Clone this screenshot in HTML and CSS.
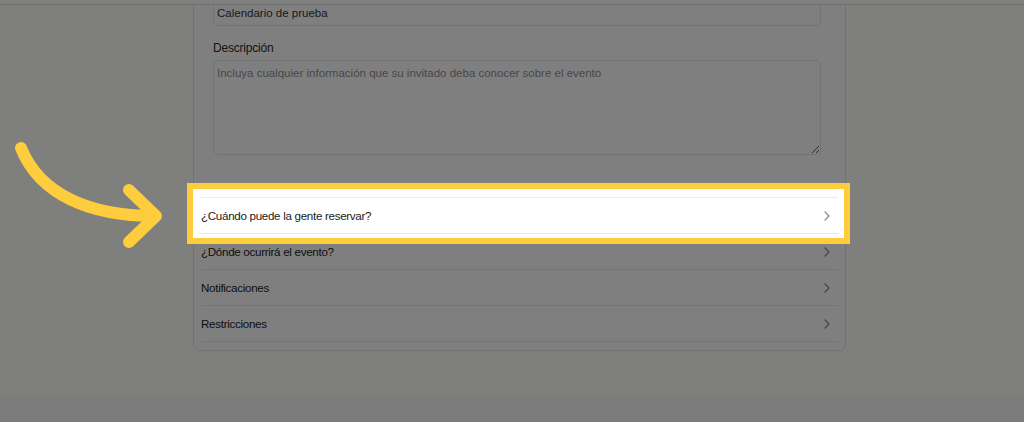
FILE: index.html
```html
<!DOCTYPE html>
<html lang="es">
<head>
<meta charset="utf-8">
<title>Evento</title>
<link rel="stylesheet" href="styles.css">
</head>
<body>
<header class="topbar"></header>
<main class="page">
  <section class="card">
    <div class="form">
      <div class="field-input">Calendario de prueba</div>
      <label class="label" for="desc">Descripción</label>
      <textarea id="desc" class="textarea" placeholder="Incluya cualquier información que su invitado deba conocer sobre el evento"></textarea>
    </div>
    <div class="list">
      <div class="spotlight">
        <div class="row row-first">
          <span>¿Cuándo puede la gente reservar?</span>
          <svg class="chev" viewBox="0 0 6 10" width="6" height="10"><path d="M1 1l4 4-4 4" fill="none" stroke="#8a8a8a" stroke-width="1.2" stroke-linecap="round" stroke-linejoin="round"/></svg>
        </div>
      </div>
      <div class="row">
        <span>¿Dónde ocurrirá el evento?</span>
        <svg class="chev" viewBox="0 0 6 10" width="6" height="10"><path d="M1 1l4 4-4 4" fill="none" stroke="#8a8a8a" stroke-width="1.2" stroke-linecap="round" stroke-linejoin="round"/></svg>
      </div>
      <div class="row">
        <span>Notificaciones</span>
        <svg class="chev" viewBox="0 0 6 10" width="6" height="10"><path d="M1 1l4 4-4 4" fill="none" stroke="#8a8a8a" stroke-width="1.2" stroke-linecap="round" stroke-linejoin="round"/></svg>
      </div>
      <div class="row">
        <span>Restricciones</span>
        <svg class="chev" viewBox="0 0 6 10" width="6" height="10"><path d="M1 1l4 4-4 4" fill="none" stroke="#8a8a8a" stroke-width="1.2" stroke-linecap="round" stroke-linejoin="round"/></svg>
      </div>
    </div>
  </section>
</main>
<footer class="footer"></footer>
<div class="overlay"></div>
<svg class="arrow" viewBox="0 0 180 260" width="180" height="260">
  <path d="M21 148 C 40 195, 90 216, 155 216" fill="none" stroke="#fecd3d" stroke-width="12" stroke-linecap="round"/>
  <path d="M129 190 L156 216 L129 242" fill="none" stroke="#fecd3d" stroke-width="12" stroke-linecap="round" stroke-linejoin="round"/>
</svg>
</body>
</html>
```
FILE: styles.css
```css
* { box-sizing: border-box; }
html, body { margin: 0; padding: 0; }
body {
  background: #fefefc;
  font-family: "Liberation Sans", Arial, sans-serif;
  color: #222;
  width: 1024px;
  height: 422px;
  overflow: hidden;
  position: relative;
}
.topbar {
  position: fixed;
  top: 0; left: 0; right: 0;
  height: 5px;
  background: #fefefc;
  border-bottom: 1px solid #dcdcdc;
  z-index: 0;
}
.page {
  padding-left: 193px;
  height: 397px;
}
.card {
  width: 653px;
  border: 1px solid #e4e4e4;
  border-top: none;
  border-radius: 0 0 7px 7px;
  padding: 0 7px 8px;
  background: #fff;
}
.form {
  padding: 0 17px 0 12px;
  display: flex;
  flex-direction: column;
}
.field-input {
  height: 26px;
  border: 1px solid #e6e6e6;
  border-radius: 0 0 5px 5px;
  padding: 6px 0 0 3px;
  font-size: 11.5px;
  color: #333;
}
.label {
  margin-top: 15px;
  font-size: 12px;
  letter-spacing: -0.2px;
  color: #2a2a2a;
  line-height: 15px;
}
.textarea {
  margin-top: 4px;
  height: 95px;
  border: 1px solid #e6e6e6;
  border-radius: 5px;
  padding: 6px 3px;
  font-family: "Liberation Sans", Arial, sans-serif;
  font-size: 11.5px;
  color: #333;
  resize: vertical;
  outline: none;
}
.textarea::placeholder { color: #8f8f8f; }
.list {
  margin-top: 42px;
}
.row {
  height: 36px;
  border-bottom: 1px solid #e8e8e8;
  display: flex;
  align-items: center;
  justify-content: space-between;
  padding: 0 8px 0 0;
  font-size: 11.6px;
  letter-spacing: -0.3px;
  color: #1a1a1a;
}
.row-first {
  border-top: 1px solid #ececec;
  height: 37px;
}
.spotlight {
  position: relative;
  z-index: 2;
  background: #fff;
  border: 6px solid #fecd3d;
  margin: -14px -12px -10px -14px;
  padding: 8px 6px 4px 8px;
}
.footer {
  height: 25px;
  background: #f6f6f6;
}
.overlay {
  position: fixed;
  inset: 0;
  background: rgba(0, 0, 0, 0.5);
  z-index: 1;
}
.arrow {
  position: absolute;
  left: 0;
  top: 0;
  z-index: 3;
}
```
